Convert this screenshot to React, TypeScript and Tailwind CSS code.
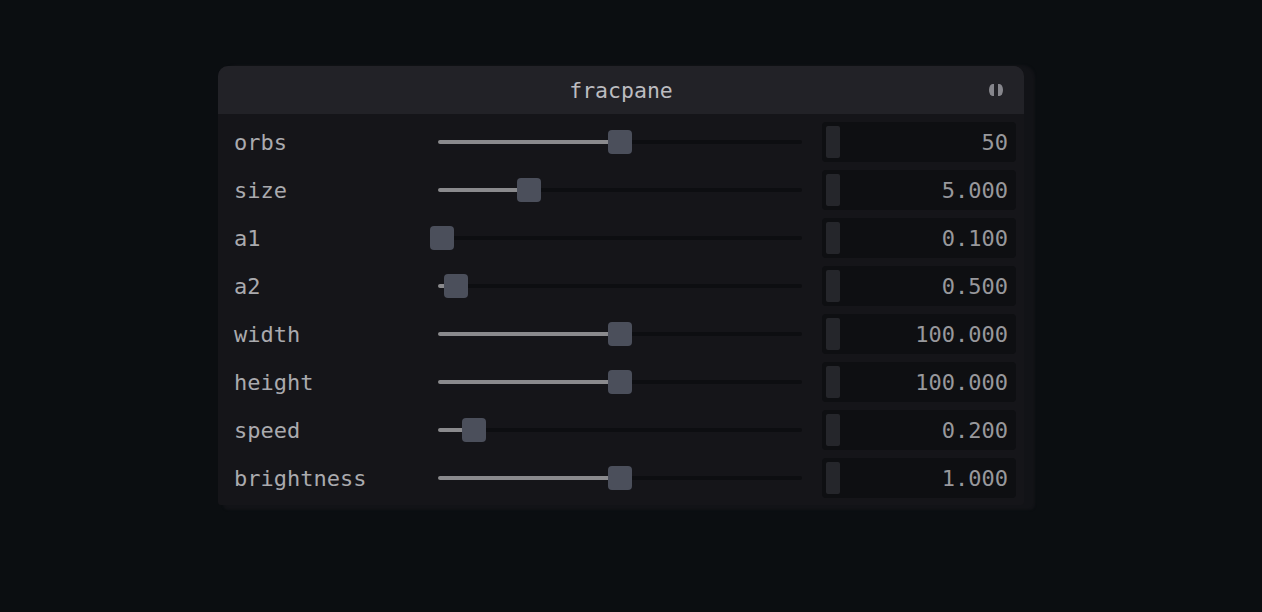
import React from "react";

type Param = { label: string; value: string; t: number };

const params: Param[] = [
  { label: "orbs", value: "50", t: 0.5 },
  { label: "size", value: "5.000", t: 0.2444 },
  { label: "a1", value: "0.100", t: 0 },
  { label: "a2", value: "0.500", t: 0.039 },
  { label: "width", value: "100.000", t: 0.5 },
  { label: "height", value: "100.000", t: 0.5 },
  { label: "speed", value: "0.200", t: 0.09 },
  { label: "brightness", value: "1.000", t: 0.5 },
];

// slider area is 380px wide, thumb is 24px
const TRAVEL = 356;

function Slider({ t }: { t: number }) {
  const thumbLeft = t * TRAVEL;
  return (
    <div className="relative h-[24px] w-[380px]">
      <div className="absolute left-[8px] right-[8px] top-[10px] h-[4px] rounded-full bg-[#0d0e11]" />
      <div
        className="absolute left-[8px] top-[10px] h-[4px] rounded-full bg-[#8a8a8d]"
        style={{ width: Math.max(0, thumbLeft + 12 - 8) }}
      />
      <div
        className="absolute top-0 h-[24px] w-[24px] rounded-[4px] bg-[#4b4f5b]"
        style={{ left: thumbLeft }}
      />
    </div>
  );
}

function Row({ p }: { p: Param }) {
  return (
    <div className="flex h-[48px] items-center pl-[16px] pr-[8px]">
      <div className="mt-[2px] w-[196px] text-[22px] leading-none text-[#aaaaae]">{p.label}</div>
      <Slider t={p.t} />
      <div className="ml-[12px] flex h-[40px] w-[194px] items-center rounded-[4px] bg-[#0e0f12] pl-[4px] pr-[8px]">
        <div className="h-[32px] w-[14px] rounded-[2px] bg-[#25262b]" />
        <div className="mt-[2px] flex-1 text-right text-[22px] leading-none text-[#98989c]">
          {p.value}
        </div>
      </div>
    </div>
  );
}

export default function App() {
  return (
    <div
      className="min-h-screen bg-[#0b0e11] pl-[218px] pt-[66px]"
      style={{ fontFamily: '"DejaVu Sans Mono", "Liberation Mono", monospace' }}
    >
      <div className="w-[806px] rounded-t-[10px] rounded-b-[3px] bg-[#151519] shadow-[8px_2px_2px_3px_#121317]">
        <div className="relative flex h-[48px] items-center justify-center rounded-t-[10px] bg-[#222227]">
          <span className="mt-[2px] text-[21.5px] leading-none text-[#bcbcc0]">fracpane</span>
          <svg
            className="absolute right-[21px] top-[18px]"
            width="14"
            height="12"
            viewBox="0 0 14 12"
          >
            <path d="M5 0 H3.5 A3.5 6 0 0 0 3.5 12 H5 Z" fill="#86868c" />
            <path d="M9 0 H10.5 A3.5 6 0 0 1 10.5 12 H9 Z" fill="#86868c" />
          </svg>
        </div>
        <div className="pb-[3px] pt-[4px]">
          {params.map((p) => (
            <Row key={p.label} p={p} />
          ))}
        </div>
      </div>
    </div>
  );
}
